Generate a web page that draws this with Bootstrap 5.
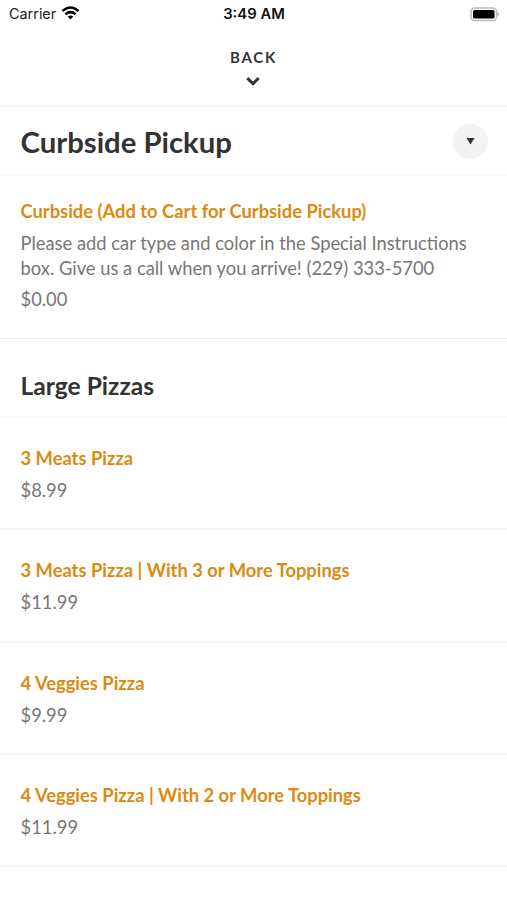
<!DOCTYPE html>
<html lang="en">
<head>
<meta charset="utf-8">
<meta name="viewport" content="width=device-width, initial-scale=1">
<title>Curbside Pickup</title>
<link href="https://cdn.jsdelivr.net/npm/bootstrap@5.3.0/dist/css/bootstrap.min.css" rel="stylesheet">
<style>
body{font-family:Lato,sans-serif;color:#333;background:#fff;font-size:18.35px;line-height:25px}
.statusbar{height:28px;font:14.8px/28px Inter,sans-serif;color:#111;display:grid;grid-template-columns:1fr auto 1fr;padding:0 7px 0 9px}
.carrier{font-size:14.4px;color:#222}
.wifi{margin-left:5px;margin-top:-2px}
.clock{font-weight:600;margin-left:-1px}
.backbar{height:79px;border-bottom:2px solid #f5f5f5;padding-top:19px}
.backlabel{font-size:15px;line-height:20px;font-weight:700;letter-spacing:1.8px}
.chevron{margin-right:1px}
.cathead{height:69px;border-bottom:2px solid #f8f8f8;padding:0 19px 0 20.5px}
.cathead h1{font-size:29.3px;font-weight:700;margin:2px 0 0}
.toggle{width:35px;height:35px;background:#f3f3f3;margin-top:1px}
.menuitem{border-bottom:2px solid #f5f5f5;padding:28px 20.5px 0;height:112.3px;color:#777}
.menuitem h3{font-size:18.35px;line-height:25px;font-weight:700;color:#db8a12;margin:0 0 7px}
.menuitem p{line-height:24.5px;margin:0 0 7px}
.menuitem.tall{height:163px;padding-top:23px;border-bottom:1px solid #ebebeb}
.sechead{height:79px;border-bottom:2px solid #f8f8f8;padding:32px 20.5px 0}
.sechead h2{font-size:24.6px;line-height:30px;font-weight:700;margin:0}
</style>
</head>
<body>
<header>
<div class="statusbar">
<div class="d-flex align-items-center"><span class="carrier">Carrier</span><svg class="wifi" width="19" height="14" viewBox="0 0 18 14"><g fill="none" stroke="#000" stroke-width="2.5"><path d="M1 5Q9-2 17 5M4 8.2Q9 4 14 8.2"/></g><path d="M6.2 10.6Q9 8.4 11.8 10.6L9 13.5z"/></svg></div>
<div class="clock">3:49 AM</div>
<div class="d-flex align-items-center justify-content-end"><svg width="30" height="15" viewBox="0 0 30 15"><rect x="1" y="1" width="25.5" height="12.5" rx="3.5" fill="none" stroke="#bbb" stroke-width="1.5"/><rect x="3" y="3" width="21.5" height="8.5" rx="1.5"/><path d="M27.5 4.8q3 2.4 0 4.8z" fill="#aaa"/></svg></div>
</div>
<div class="backbar d-flex flex-column align-items-center"><span class="backlabel">BACK</span><svg class="chevron mt-2" width="16" height="12" viewBox="0 0 16 12"><path d="M2.300 3.200l5.700 5.500 5.700-5.500" fill="none" stroke="#333" stroke-width="3"/></svg></div>
</header>
<main>
<div class="cathead d-flex align-items-center justify-content-between"><h1>Curbside Pickup</h1><span class="toggle rounded-circle d-flex align-items-center justify-content-center"><svg width="9" height="8" viewBox="0 0 9 8"><path d="M.5 1h8l-4 6.500z" fill="#333"/></svg></span></div>
<article class="menuitem tall"><h3>Curbside (Add to Cart for Curbside Pickup)</h3><p>Please add car type and color in the Special Instructions<br>box. Give us a call when you arrive! (229) 333-5700</p><div>$0.00</div></article>
<div class="sechead"><h2>Large Pizzas</h2></div>
<article class="menuitem"><h3>3 Meats Pizza</h3><div>$8.99</div></article>
<article class="menuitem"><h3>3 Meats Pizza | With 3 or More Toppings</h3><div>$11.99</div></article>
<article class="menuitem"><h3>4 Veggies Pizza</h3><div>$9.99</div></article>
<article class="menuitem"><h3>4 Veggies Pizza | With 2 or More Toppings</h3><div>$11.99</div></article>
</main>
<script src="https://cdn.jsdelivr.net/npm/bootstrap@5.3.0/dist/js/bootstrap.bundle.min.js"></script>
</body>
</html>
